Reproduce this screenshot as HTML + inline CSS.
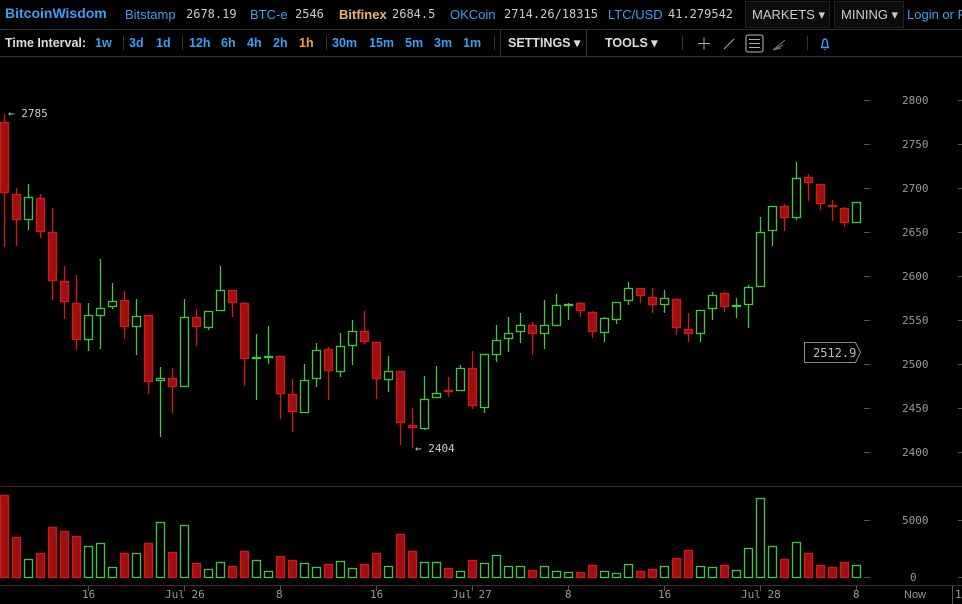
<!DOCTYPE html>
<html><head><meta charset="utf-8"><style>
*{margin:0;padding:0;box-sizing:border-box}
body{width:962px;height:604px;background:#000;overflow:hidden;position:relative;font-family:"Liberation Sans",sans-serif}
.t{position:absolute;white-space:nowrap;line-height:1}
.b{color:#3d9cf5}
.m{font-family:"DejaVu Sans Mono","Liberation Mono",monospace;color:#ccc;font-size:12px}
.h1{font-size:13px;top:8px}
.r2{font-size:12.5px;font-weight:bold;top:37px}
svg{position:absolute;left:0;top:0}
.box{position:absolute;top:1px;height:27px;background:#0c0c0c;border:1px solid #222}
</style></head><body>
<div class="box" style="left:745px;width:85px"></div>
<div class="box" style="left:834px;width:70px"></div>
<div class="t b" style="left:5px;top:6px;font-size:14px;font-weight:bold">BitcoinWisdom</div>
<div class="t b h1" style="left:125px">Bitstamp</div><div class="t m" style="left:186px;top:8px">2678.19</div>
<div class="t b h1" style="left:250px">BTC-e</div><div class="t m" style="left:295px;top:8px">2546</div>
<div class="t h1" style="left:339px;color:#f4b06a;font-weight:bold">Bitfinex</div><div class="t m" style="left:392px;top:8px">2684.5</div>
<div class="t b h1" style="left:450px">OKCoin</div><div class="t m" style="left:504px;top:8px">2714.26/18315</div>
<div class="t b h1" style="left:608px">LTC/USD</div><div class="t m" style="left:668px;top:8px">41.279542</div>
<div class="t h1" style="left:752px;color:#ccc">MARKETS ▾</div>
<div class="t h1" style="left:841px;color:#ccc">MINING ▾</div>
<div class="t b h1" style="left:907px">Login or R</div>
<div class="t r2" style="left:5px;color:#ddd">Time Interval:</div>
<div class="t b r2" style="left:95px">1w</div>
<div class="t b r2" style="left:129px">3d</div>
<div class="t b r2" style="left:156px">1d</div>
<div class="t b r2" style="left:189px">12h</div>
<div class="t b r2" style="left:221px">6h</div>
<div class="t b r2" style="left:247px">4h</div>
<div class="t b r2" style="left:273px">2h</div>
<div class="t r2" style="left:299px;color:#f4a040">1h</div>
<div class="t b r2" style="left:332px">30m</div>
<div class="t b r2" style="left:369px">15m</div>
<div class="t b r2" style="left:405px">5m</div>
<div class="t b r2" style="left:434px">3m</div>
<div class="t b r2" style="left:463px">1m</div>
<div class="t r2" style="left:508px;color:#ddd">SETTINGS ▾</div>
<div class="t r2" style="left:605px;color:#ddd">TOOLS ▾</div>
<svg width="962" height="604" viewBox="0 0 962 604">
<g stroke="#333" fill="none">
<path d="M0 29.5H962M0 56.5H962"/>
<path d="M123.5 36v14M182.5 36v14M326.5 36v14M494.5 36v14M500.5 30v26M586.5 30v26M682.5 36v14M807.5 36v14"/>
<path d="M0 486.5H962M0 585.5H962"/>
</g>
<g stroke="#aaa" fill="none" stroke-width="1">
<path d="M698 43.5h12M704 37.5v12M724 49l10-10"/>
<rect x="746" y="35" width="17" height="17" rx="2" stroke="#bbb"/>
<path d="M749 39.5h11M749 43.5h11M749 47.5h11"/>
<path d="M773 50l12-10M773 50l10-5M773 50l8-2" stroke="#777"/>
</g>
<path d="M821 47.5h8M822 47l1-6a2 2 0 0 1 4 0l1 6M825 49v1" stroke="#3d9cf5" fill="none" stroke-width="1.4"/>
<g stroke="#555"><path d="M864 100.5h6M864 144.5h6M864 188.5h6M864 232.5h6M864 276.5h6M864 320.5h6M864 364.5h6M864 408.5h6M864 452.5h6M958 100.5h4M958 144.5h4M958 188.5h4M958 232.5h4M958 276.5h4M958 320.5h4M958 364.5h4M958 408.5h4M958 452.5h4M864 520.5h6M864 577.5h6M958 520.5h4M958 577.5h4"/>
<path d="M88.5 586v5M184.5 586v5M280.5 586v5M376.5 586v5M472.5 586v5M568.5 586v5M664.5 586v5M760.5 586v5M856.5 586v5M952.5 586v18"/></g>
<g font-family="DejaVu Sans Mono,Liberation Mono,monospace" font-size="11" fill="#999">
<text x="902" y="104">2800</text><text x="902" y="148">2750</text><text x="902" y="192">2700</text><text x="902" y="236">2650</text><text x="902" y="280">2600</text><text x="902" y="324">2550</text><text x="902" y="368">2500</text><text x="902" y="412">2450</text><text x="902" y="456">2400</text>
<text x="902" y="524">5000</text><text x="910" y="581">0</text>
<text x="82" y="598">16</text><text x="165" y="598">Jul 26</text><text x="276" y="598">8</text><text x="370" y="598">16</text><text x="452" y="598">Jul 27</text><text x="565" y="598">8</text><text x="658" y="598">16</text><text x="741" y="598">Jul 28</text><text x="853" y="598">8</text>
<text x="904" y="598" font-family="Liberation Sans,sans-serif">Now</text><text x="955" y="598">1</text>
<text x="8" y="117" fill="#ccc">← 2785</text><text x="415" y="452" fill="#ccc">← 2404</text>
<text x="813" y="357" fill="#bbb" font-size="12">2512.9</text>
</g>
<path d="M804.5 342.5h51l5 10-5 10h-51z" stroke="#888" fill="none"/>
<g id="c" stroke-width="1.3"></g>
</svg>
<script>
var d=[[4,122,193,114,247,'R',495],[16,194,220,188,246,'R',537],[28,197,220,184,230,'G',559],[40,198,232,194,238,'R',553],[52,232,281,208,300,'R',527],[64,281,302,266,319,'R',531],[76,303,340,275,350,'R',536],[88,315,340,303,351,'G',546],[100,308,316,259,349,'G',543],[112,301,307,283,309,'G',567],[124,300,327,291,339,'R',553],[136,316,327,299,355,'G',553],[148,315,382,315,394,'R',543],[160,378,381,367,437,'G',522],[172,378,387,368,413,'R',552],[184,317,387,299,387,'G',525],[196,317,327,309,346,'R',563],[208,311,328,311,330,'G',569],[220,290,311,266,311,'G',562],[232,290,303,290,317,'R',566],[244,303,359,302,386,'R',551],[256,357,359,334,400,'G',560],[268,356,358,326,364,'G',571],[280,356,394,356,419,'R',556],[292,394,412,379,432,'R',560],[304,380,413,364,413,'G',563],[316,350,379,343,387,'G',567],[328,349,371,347,400,'R',564],[340,346,372,333,377,'G',561],[352,331,346,320,365,'G',568],[364,331,342,311,344,'R',564],[376,342,379,342,399,'R',553],[388,371,380,356,392,'G',566],[400,371,423,371,445,'R',534],[412,425,428,408,448,'R',551],[424,399,429,376,430,'G',562],[436,393,398,366,398,'G',562],[448,390,391,377,397,'R',568],[460,368,391,365,391,'G',571],[472,368,406,351,409,'R',560],[484,354,408,354,413,'G',563],[496,340,355,325,362,'G',555],[508,333,339,317,352,'G',566],[520,325,332,313,343,'G',566],[532,325,334,322,355,'R',570],[544,325,334,300,349,'G',566],[556,305,326,294,326,'G',571],[568,304,305,303,320,'G',572],[580,303,311,302,317,'R',572],[592,312,332,311,338,'R',565],[604,318,333,317,342,'G',571],[616,302,320,302,324,'G',573],[628,288,301,282,305,'G',564],[640,288,296,288,303,'R',571],[652,297,305,288,313,'R',569],[664,298,305,290,313,'G',566],[676,299,328,298,335,'R',558],[688,329,334,313,342,'R',550],[700,310,334,310,342,'G',566],[712,295,309,292,320,'G',567],[724,293,307,292,312,'R',565],[736,305,306,298,318,'G',570],[748,287,305,285,328,'G',548],[760,232,287,217,287,'G',498],[772,206,231,206,246,'G',546],[784,206,218,204,231,'R',559],[796,178,218,162,220,'G',542],[808,177,183,174,201,'R',553],[820,184,204,184,210,'R',565],[832,205,206,200,221,'R',567],[844,208,223,207,227,'R',562],[856,202,223,202,223,'G',565]];
var s='';d.forEach(function(a){var r=a[5]=='R',st=r?'#d41818':'#3fc83f',f=r?'#9c1010':'#000';
s+='<path d="M'+(a[0]+.5)+' '+a[3]+'V'+a[4]+'" stroke="'+st+'"/>';
s+='<rect x="'+(a[0]-3.5)+'" y="'+(a[1]+.5)+'" width="8" height="'+Math.max(a[2]-a[1]-1,1)+'" stroke="'+st+'" fill="'+f+'"/>';
s+='<rect x="'+(a[0]-3.5)+'" y="'+(a[6]+.5)+'" width="8" height="'+(577-a[6])+'" stroke="'+st+'" fill="'+f+'"/>';});
document.getElementById('c').innerHTML=s;
</script>
</body></html>
